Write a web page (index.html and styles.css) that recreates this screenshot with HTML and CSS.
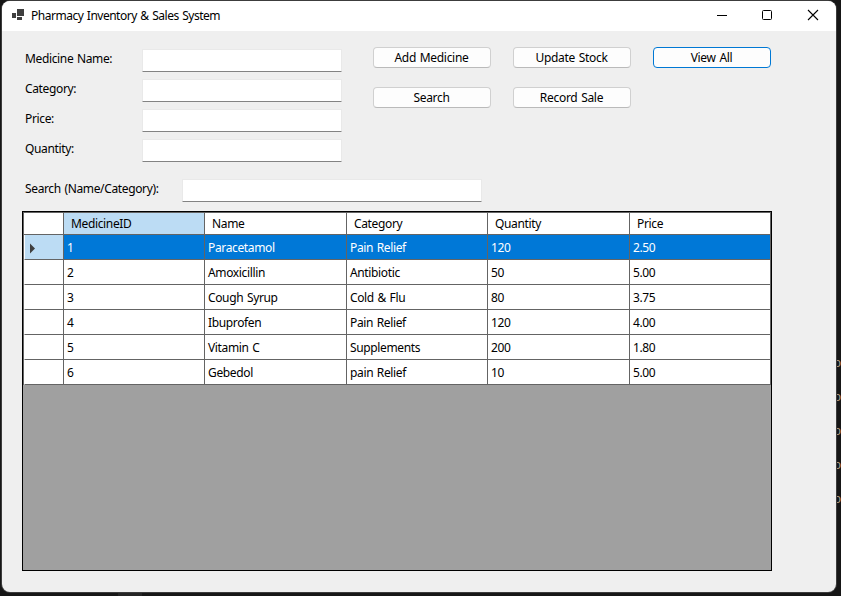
FILE: index.html
```
<!DOCTYPE html>
<html lang="en">
<head>
<meta charset="utf-8">
<title>Pharmacy Inventory &amp; Sales System</title>
<link rel="stylesheet" href="styles.css">
</head>
<body>
<div class="behind-top"></div>
<div class="behind-right"><span>o</span><span>o</span><span>o</span><span>o</span><span>o</span></div>
<div class="behind-bottom"></div>
<main class="window">
  <header class="titlebar">
    <svg class="app-icon" width="13" height="12" viewBox="0 0 13 12"><path fill="#3f3f3f" d="M5 0h7v7H5zM0 4h4v5H0zM5 8h5v3H5z"/></svg>
    <h1>Pharmacy Inventory &amp; Sales System</h1>
    <svg class="controls" width="104" height="12" viewBox="0 0 104 12" fill="none" stroke="#000"><path d="M1 6.5h10"/><rect x="46.500" y="1.500" width="9" height="9" rx="1"/><path d="M92 1l10 10M102 1L92 11" stroke-width="1.100"/></svg>
  </header>
  <section class="form">
    <div class="fields">
      <div class="field"><label>Medicine Name:</label><input></div>
      <div class="field"><label>Category:</label><input></div>
      <div class="field"><label>Price:</label><input></div>
      <div class="field"><label>Quantity:</label><input></div>
    </div>
    <div class="actions">
      <button>Add Medicine</button><button>Update Stock</button><button class="focused">View All</button>
      <button>Search</button><button>Record Sale</button>
    </div>
  </section>
  <div class="field search"><label>Search (Name/Category):</label><input></div>
  <div class="grid">
    <table>
      <colgroup><col class="c-head"><col class="c-a"><col class="c-b"><col class="c-a"><col class="c-b"><col class="c-a"></colgroup>
      <thead><tr><th></th><th class="current">MedicineID</th><th>Name</th><th>Category</th><th>Quantity</th><th>Price</th></tr></thead>
      <tbody>
        <tr class="selected"><td><svg width="7" height="11" viewBox="0 0 7 11"><path fill="#3f3f3f" d="M1 .5L6 5.500 1 10.500z"/></svg></td><td>1</td><td>Paracetamol</td><td>Pain Relief</td><td>120</td><td>2.50</td></tr>
        <tr><td></td><td>2</td><td>Amoxicillin</td><td>Antibiotic</td><td>50</td><td>5.00</td></tr>
        <tr><td></td><td>3</td><td>Cough Syrup</td><td>Cold &amp; Flu</td><td>80</td><td>3.75</td></tr>
        <tr><td></td><td>4</td><td>Ibuprofen</td><td>Pain Relief</td><td>120</td><td>4.00</td></tr>
        <tr><td></td><td>5</td><td>Vitamin C</td><td>Supplements</td><td>200</td><td>1.80</td></tr>
        <tr><td></td><td>6</td><td>Gebedol</td><td>pain Relief</td><td>10</td><td>5.00</td></tr>
      </tbody>
    </table>
  </div>
</main>
</body>
</html>
```
FILE: styles.css
```
* { box-sizing: border-box; }
html, body { height: 100%; }
body {
  margin: 0;
  padding: 1px 0 0 2px;
  overflow: hidden;
  position: relative;
  background: #161616;
  font: 12px/16px "Noto Sans", "Open Sans", sans-serif;
  letter-spacing: -0.36px;
  word-spacing: 0.9px;
  color: #000;
}
.window {
  position: relative;
  width: 834px;
  height: 591px;
  background: #efefef;
  border-radius: 8px;
  box-shadow: 0 0 0 1px #3c3c3c;
  overflow: hidden;
}
.titlebar {
  display: flex;
  align-items: center;
  height: 30px;
  padding: 0 16px 0 10px;
  background: #fff;
}
.titlebar h1 { margin: 0 auto 0 6px; font: inherit; letter-spacing: -0.49px; }
.app-icon { display: block; margin-top: -2px; }
.controls { display: block; margin-top: -2px; }

.form { display: flex; height: 143px; padding: 16px 0 0 23px; }
.fields { width: 348px; }
.field { display: flex; height: 30px; }
.field label { width: 117px; padding-top: 4px; }
.field input {
  width: 200px;
  height: 23px;
  margin-top: 2px;
  padding: 0;
  border: 1px solid #e9e9e9;
  border-bottom: 1px solid #838383;
  border-radius: 1px;
  background: #fff;
}
.field.search { height: 37px; padding: 3px 0 0 23px; }
.field.search label { width: 157px; }
.field.search input { width: 300px; }
.actions {
  display: grid;
  grid-template-columns: repeat(3, 118px);
  grid-auto-rows: 21px;
  gap: 19px 22px;
}
.actions button {
  padding: 0 1px 0 0;
  border: 1px solid #d0d0d0;
  border-bottom-color: #bababa;
  border-radius: 4px;
  background: #fdfdfd;
  font: inherit;
  letter-spacing: -0.3px;
  word-spacing: inherit;
  color: inherit;
}
.actions .focused { border-color: #0078d4; }

.grid {
  width: 750px;
  height: 360px;
  margin-left: 20px;
  border: 1px solid #000;
  background: #a0a0a0;
}
table {
  width: 748px;
  table-layout: fixed;
  border-collapse: separate;
  border-spacing: 0;
  border-top: 1px solid #646464;
  border-left: 1px solid #646464;
}
.c-head { width: 40px; }
.c-a { width: 141px; }
.c-b { width: 142px; }
th, td {
  height: 25px;
  padding: 2px 0 0 3px;
  border-right: 1px solid #646464;
  border-bottom: 1px solid #646464;
  background: #fff;
  text-align: left;
  font-weight: 400;
}
th { height: 22px; padding: 0 0 0 7px; }
th.current, .selected td:first-child { background: #bcdcf4; }
.selected td { background: #0078d7; color: #fff; }
td:first-child { padding-left: 4px; border-left: 1px solid #fff; }
td svg { display: block; }

.behind-top { position: absolute; left: 140px; top: 0; width: 8px; height: 1px; background: #4c86a8; }
.behind-right {
  position: absolute;
  top: 356px;
  left: 834px;
  display: flex;
  flex-direction: column;
  gap: 18px;
  font: 12px/16px "Liberation Mono", monospace;
  color: #b9a58d;
}
.behind-bottom { position: absolute; left: 118px; top: 592px; width: 24px; height: 4px; background: #242424; }
```
